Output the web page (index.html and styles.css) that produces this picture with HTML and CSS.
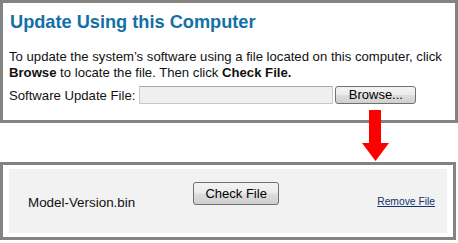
FILE: index.html
```html
<!DOCTYPE html>
<html>
<head>
<meta charset="utf-8">
<link rel="stylesheet" href="styles.css">
</head>
<body>
<div class="page">
  <section class="panel upload">
    <h1 class="title">Update Using this Computer</h1>
    <p class="desc">To update the system’s software using a file located on this computer, click <b>Browse</b> to locate the file. Then click <b>Check File.</b></p>
    <div class="file-row">
      <label class="file-label">Software Update File:</label>
      <span class="file-input"></span>
      <button class="btn browse">Browse...</button>
    </div>
  </section>
  <div class="arrow">
    <svg width="28" height="52" viewBox="0 0 28 52"><rect x="7" y="0" width="12" height="34" fill="#ff0000"/><polygon points="0,33 27,33 13.5,51" fill="#ff0000"/></svg>
  </div>
  <section class="panel result">
    <div class="result-inner">
      <span class="filename">Model-Version.bin</span>
      <button class="btn check">Check File</button>
      <a class="remove" href="#">Remove File</a>
    </div>
  </section>
</div>
</body>
</html>
```
FILE: styles.css
```css
html, body {
  margin: 0;
  padding: 0;
  background: #ffffff;
}
.page {
  position: relative;
  width: 458px;
  height: 243px;
  font-family: "Liberation Sans", Arial, sans-serif;
  color: #000;
}
.panel {
  box-sizing: border-box;
  border: 3px solid #838383;
}
.upload {
  width: 458px;
  height: 123px;
  padding: 7px 6px 0 6px;
}
.title {
  margin: 0 0 0 1px;
  font-size: 18.2px;
  font-weight: bold;
  color: #1270a8;
  line-height: 24px;
}
.desc {
  margin: 15px 0 0 0;
  font-size: 13.15px;
  line-height: 16px;
  color: #111;
}
.desc b {
  font-weight: bold;
}
.file-row {
  display: flex;
  align-items: center;
  margin-top: 5px;
  font-size: 13.15px;
}
.file-label {
  color: #111;
  margin-right: 4px;
}
.file-input {
  display: block;
  width: 192px;
  height: 16px;
  background: #efefef;
  border: 1px solid #c9c9c9;
  border-top-color: #a9a9a9;
}
.btn {
  font-family: "Liberation Sans", Arial, sans-serif;
  font-size: 13px;
  color: #000;
  border: 1px solid #707070;
  border-radius: 3px;
  background: linear-gradient(#f3f3f3, #ebebeb 48%, #dddddd 52%, #cfcfcf);
  padding: 0;
  height: 18px;
  line-height: 16px;
}
.browse {
  width: 81px;
  margin-left: 2px;
}
.arrow {
  position: absolute;
  left: 362px;
  top: 110px;
  line-height: 0;
}
.result {
  width: 456px;
  height: 78px;
  margin-top: 39px;
  padding: 4px 6px 4px 6px;
}
.result-inner {
  box-sizing: border-box;
  height: 64px;
  background: #f2f2f2;
  display: flex;
  align-items: flex-start;
  padding: 13px 12px 0 19px;
}
.filename {
  font-size: 13.4px;
  margin-top: 13px;
  color: #111;
}
.check {
  width: 86px;
  height: 23px;
  margin-left: 58px;
  border-radius: 3px;
}
.remove {
  margin-left: auto;
  margin-top: 14px;
  font-size: 10.3px;
  color: #13336b;
  text-decoration: underline;
}
```
